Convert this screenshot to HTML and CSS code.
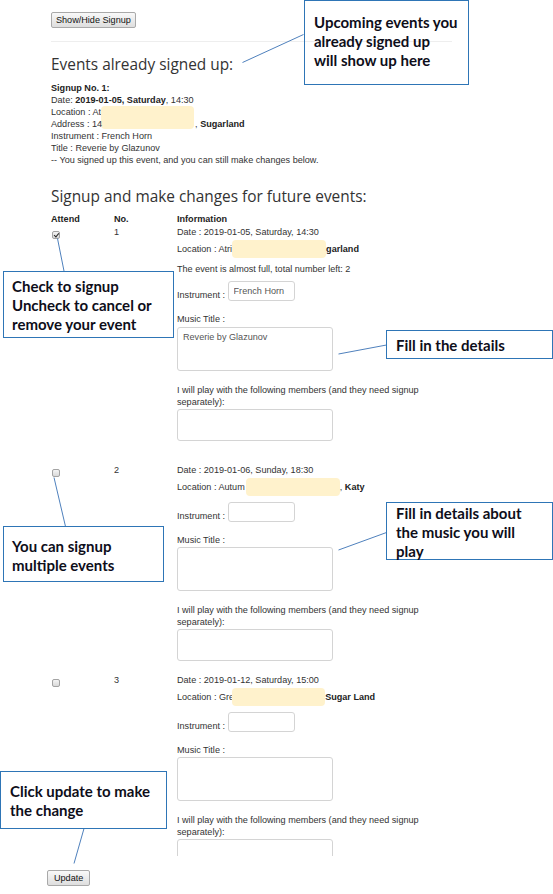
FILE: index.html
```html
<!DOCTYPE html>
<html lang="en">
<head>
  <meta charset="UTF-8" />
  <meta name="viewport" content="width=device-width, initial-scale=1.0" />
  <title>Event Signup</title>
  <link rel="stylesheet" href="styles.css">
</head>
<body>
  <div class="page">
    <button class="btn" type="button">Show/Hide Signup</button>
    <hr class="rule">

    <h2 class="title">Events already signed up:</h2>
    <div class="signed">
      <div class="line"><b>Signup No. 1:</b></div>
      <div class="line">Date: <b>2019-01-05, Saturday</b>, 14:30</div>
      <div class="line">Location : At<span class="redact redact-double"></span></div>
      <div class="line">Address : 14<span class="gap"></span>, <b>Sugarland</b></div>
      <div class="line">Instrument : French Horn</div>
      <div class="line">Title : Reverie by Glazunov</div>
      <div class="line">-- You signed up this event, and you can still make changes below.</div>
    </div>

    <h2 class="title title-second">Signup and make changes for future events:</h2>
    <table class="events">
      <thead>
        <tr><th class="col-attend">Attend</th><th class="col-num">No.</th><th>Information</th></tr>
      </thead>
      <tbody>
        <tr class="event event-first">
          <td><input class="check" type="checkbox" checked></td>
          <td>1</td>
          <td class="info">
            <div class="line">Date : 2019-01-05, Saturday, 14:30</div>
            <div class="loc">Location : Atri<span class="redact redact-a"></span><b>garland</b></div>
            <div class="line note">The event is almost full, total number left: 2</div>
            <div class="field"><span class="line">Instrument :&nbsp;</span><input class="text" type="text" value="French Horn"></div>
            <div class="line label">Music Title :</div>
            <textarea class="area area-title">Reverie by Glazunov</textarea>
            <div class="line label">I will play with the following members (and they need signup separately):</div>
            <textarea class="area area-members"></textarea>
          </td>
        </tr>
        <tr class="event">
          <td><input class="check" type="checkbox"></td>
          <td>2</td>
          <td class="info info-shift">
            <div class="line">Date : 2019-01-06, Sunday, 18:30</div>
            <div class="loc">Location : Autum<span class="redact redact-b"></span>, <b>Katy</b></div>
            <div class="field"><span class="line">Instrument :&nbsp;</span><input class="text" type="text"></div>
            <div class="line label">Music Title :</div>
            <textarea class="area area-title"></textarea>
            <div class="line label">I will play with the following members (and they need signup separately):</div>
            <textarea class="area area-members"></textarea>
          </td>
        </tr>
        <tr class="event event-last">
          <td><input class="check" type="checkbox"></td>
          <td>3</td>
          <td class="info info-shift">
            <div class="line">Date : 2019-01-12, Saturday, 15:00</div>
            <div class="loc">Location : Gre<span class="redact redact-c"></span><b>Sugar Land</b></div>
            <div class="field"><span class="line">Instrument :&nbsp;</span><input class="text" type="text"></div>
            <div class="line label">Music Title :</div>
            <textarea class="area area-title"></textarea>
            <div class="line label">I will play with the following members (and they need signup separately):</div>
            <div class="clip"><textarea class="area area-members"></textarea></div>
          </td>
        </tr>
      </tbody>
    </table>

    <button class="btn btn-update" type="submit">Update</button>
  </div>

  <!-- notes drawn over the screenshot -->
  <svg class="pointers" width="553" height="894" viewBox="0 0 553 894">
    <line x1="242.5" y1="62.5" x2="303.5" y2="34.5" />
    <line x1="57.5" y1="238.5" x2="64" y2="271" />
    <line x1="338.5" y1="354" x2="386.5" y2="345" />
    <line x1="54" y1="477.5" x2="65.5" y2="526.5" />
    <line x1="338.5" y1="550" x2="386.5" y2="532.5" />
    <line x1="84" y1="828.5" x2="74" y2="863.5" />
  </svg>
  <div class="callout callout-upcoming">Upcoming events you<br>already signed up<br>will show up here</div>
  <div class="callout callout-check">Check to signup<br>Uncheck to cancel or<br>remove your event</div>
  <div class="callout callout-details">Fill in the details</div>
  <div class="callout callout-multiple">You can signup<br>multiple events</div>
  <div class="callout callout-music">Fill in details about<br>the music you will<br>play</div>
  <div class="callout callout-update">Click update to make<br>the change</div>
</body>
</html>
```

FILE: styles.css
```css
:root {
  --texto: #333333;
  --tenue: #555555;
  --borde: #d4d4d4;
  --tapado: #fff2cc;
  --azul: #2e75b6;
  --linea: #4f81bd;
}

body {
  margin: 0;
  position: relative;
  width: 553px;
  min-height: 894px;
  background: #fff;
  color: var(--texto);
  font-family: "Liberation Sans", Arial, sans-serif;
  font-size: 9.1px;
  line-height: 12.1px;
}

.page {
  width: 401px;
  padding: 12px 0 0 51px;
}

.btn {
  display: block;
  box-sizing: border-box;
  height: 16px;
  margin: 0;
  padding: 0 4px;
  border: 1px solid #a9a9a9;
  border-radius: 2px;
  background: linear-gradient(#f9f9f9, #dedede);
  color: #111;
  font-family: inherit;
  font-size: 9.1px;
  line-height: 14px;
}

.btn-update {
  margin: 14px 0 0 -4px;
  padding: 0 6px;
}

.rule {
  height: 0;
  margin: 13px 0 0;
  border: 0;
  border-top: 1px solid #eeeeee;
}

.title {
  margin: 13.5px 0 9px;
  font-family: "Open Sans", sans-serif;
  font-size: 15.4px;
  font-weight: 400;
  line-height: 17px;
  color: var(--texto);
}

.title-second {
  margin: 21.5px 0 8.5px;
}

.line {
  line-height: 12.1px;
}

b, th {
  color: #222;
}

.redact {
  display: inline-block;
  height: 18px;
  vertical-align: top;
  background: var(--tapado);
  border-radius: 4px;
}

.redact-double {
  width: 93px;
  height: 23px;
  margin-bottom: -11px;
}

.gap {
  display: inline-block;
  width: 93px;
}

.redact-a { width: 94px; }
.redact-b { width: 94px; margin-left: 1px; }
.redact-c { width: 93px; margin-left: -2px; }

.events {
  width: 401px;
  border-collapse: collapse;
  border-spacing: 0;
}

.events th {
  padding: 0 0 1px;
  text-align: left;
  font-weight: bold;
  line-height: 12.1px;
}

.col-attend, .col-num {
  width: 63px;
}

.events td {
  padding: 0 0 13px;
  vertical-align: top;
}

.event-first td { padding-bottom: 23px; }
.event-last td { padding-bottom: 0; }

.check {
  display: block;
  position: relative;
  box-sizing: border-box;
  width: 8px;
  height: 8px;
  margin: 5px 0 0 1px;
  appearance: none;
  border: 1px solid #a3a3a3;
  border-radius: 2px;
  background: linear-gradient(#f4f4f4, #d9d9d9);
}

.check:checked::after {
  content: "";
  position: absolute;
  left: 2px;
  top: 0;
  width: 1.5px;
  height: 4px;
  border-right: 1.3px solid #222;
  border-bottom: 1.3px solid #222;
  transform: rotate(40deg);
}

.info-shift {
  padding-left: 1px;
}

.loc {
  margin-top: 2px;
  line-height: 18px;
}

.note {
  margin-top: 5px;
}

.field {
  display: flex;
  align-items: flex-end;
  margin-top: 6px;
}

.text {
  box-sizing: border-box;
  width: 67px;
  height: 20px;
  margin: 0;
  padding: 0 5px;
  border: 1px solid var(--borde);
  border-radius: 3px;
  color: var(--tenue);
  font-family: inherit;
  font-size: 9.1px;
}

.label {
  margin-top: 12px;
}

.area {
  display: block;
  box-sizing: border-box;
  width: 156px;
  margin: 1px 0 0;
  padding: 3px 5px;
  border: 1px solid var(--borde);
  border-radius: 3px;
  resize: none;
  color: var(--tenue);
  font-family: inherit;
  font-size: 9.1px;
  line-height: 12px;
}

.area-title { height: 44px; }
.area-members { height: 32px; }

.area + .label {
  margin-top: 13px;
}

.clip {
  height: 18px;
  overflow: hidden;
}

.clip .area {
  margin-top: 1px;
}

/* Notas encima de la captura */
.pointers {
  position: absolute;
  left: 0;
  top: 0;
  pointer-events: none;
}

.pointers line {
  stroke: var(--linea);
  stroke-width: 1;
}

.callout {
  position: absolute;
  box-sizing: border-box;
  padding-left: 9px;
  border: 1px solid var(--azul);
  color: #0e0e1a;
  font-family: Lato, "Open Sans", sans-serif;
  font-size: 15px;
  font-weight: bold;
  line-height: 18.8px;
  white-space: nowrap;
}

.callout-upcoming { left: 304px; top: 0; width: 165px; height: 85px; padding-top: 12px; }
.callout-check { left: 3px; top: 271px; width: 171px; height: 67px; padding-top: 5px; padding-left: 8px; }
.callout-details { left: 386px; top: 330px; width: 167px; height: 29px; padding-top: 5px; }
.callout-multiple { left: 3px; top: 526px; width: 161px; height: 56px; padding-top: 10px; padding-left: 8px; }
.callout-music { left: 386px; top: 502px; width: 167px; height: 58px; padding-top: 1px; }
.callout-update { left: 0; top: 771px; width: 167px; height: 58px; padding-top: 10px; }
```
